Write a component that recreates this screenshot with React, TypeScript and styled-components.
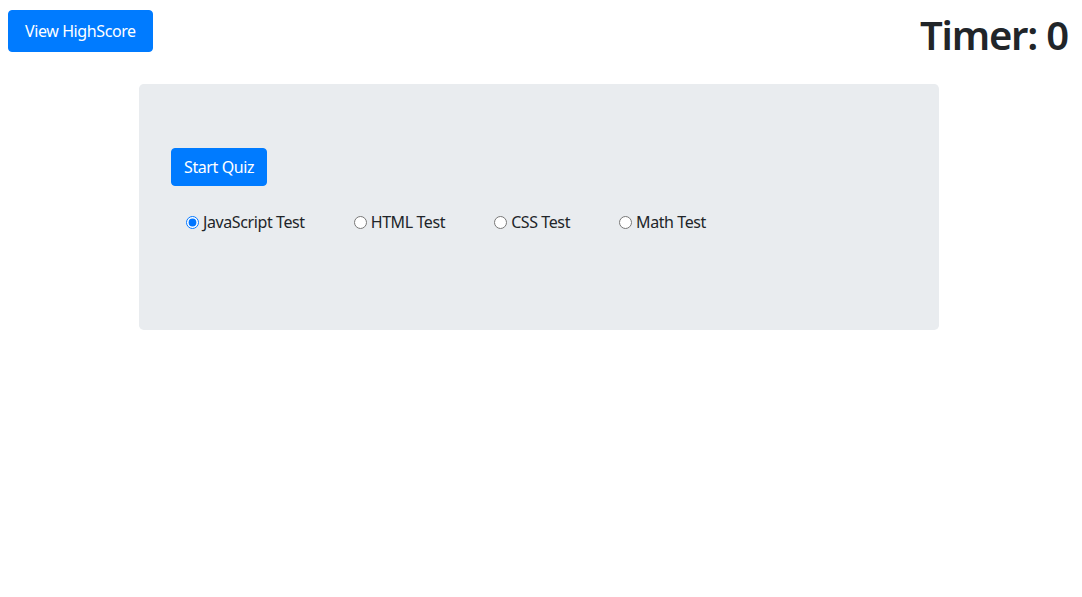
import React, { useState } from "react";
import styled, { createGlobalStyle } from "styled-components";

const Global = createGlobalStyle`
  html, body { margin: 0; padding: 0; background: #fff; }
  body {
    font-family: "Noto Sans", "Open Sans", sans-serif;
    font-size: 16px;
    line-height: 1.5;
    letter-spacing: -0.025em;
    color: #212529;
  }
  * { box-sizing: border-box; }
`;

const Page = styled.div`
  width: 1082px;
  min-height: 597px;
`;

const Header = styled.header`
  display: flex;
  justify-content: space-between;
  align-items: flex-start;
  padding: 10px 14px 0 8px;
`;

const Button = styled.button<{ $size?: "md" | "lg" }>`
  display: inline-block;
  font-family: inherit;
  font-size: 16px;
  line-height: 24px;
  font-weight: 400;
  letter-spacing: inherit;
  color: #fff;
  background: #007bff;
  border: 1px solid #007bff;
  border-radius: 4px;
  padding: ${(p) => (p.$size === "lg" ? "8px 16px" : "6px 12px")};
  cursor: pointer;
`;

const Timer = styled.h1`
  margin: 1px 0 0;
  font-size: 40px;
  line-height: 48px;
  font-weight: 600;
  letter-spacing: -0.03em;
  color: #212529;
`;

const Jumbotron = styled.section`
  width: 800px;
  margin: 25px 0 0 139px;
  padding: 64px 32px;
  background: #e9ecef;
  border-radius: 4.8px;
`;

const RadioRow = styled.div`
  display: flex;
  align-items: center;
  gap: 44px;
  margin: 24px 0 32px 10px;
  height: 24px;
`;

const RadioLabel = styled.label`
  display: inline-flex;
  align-items: center;
  font-size: 16px;
  line-height: 24px;
  color: #212529;
  cursor: pointer;
`;

const Radio = styled.input`
  width: 13px;
  height: 13px;
  margin: 0 4px 0 5px;
`;

const tests = ["JavaScript Test", "HTML Test", "CSS Test", "Math Test"];

export default function App() {
  const [selected, setSelected] = useState(tests[0]);
  return (
    <Page>
      <Global />
      <Header>
        <Button $size="lg">View HighScore</Button>
        <Timer>Timer: 0</Timer>
      </Header>
      <Jumbotron>
        <Button>Start Quiz</Button>
        <RadioRow>
          {tests.map((t) => (
            <RadioLabel key={t}>
              <Radio
                type="radio"
                name="test"
                checked={selected === t}
                onChange={() => setSelected(t)}
              />
              {t}
            </RadioLabel>
          ))}
        </RadioRow>
      </Jumbotron>
    </Page>
  );
}
